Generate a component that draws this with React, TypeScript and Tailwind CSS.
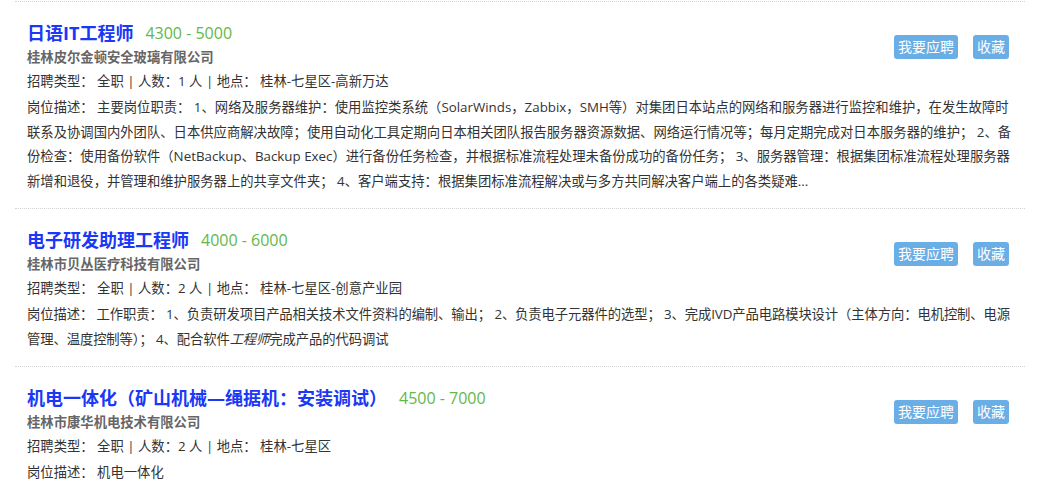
const jobs = [
    {
        title: "日语IT工程师",
        salary: "4300 - 5000",
        company: "桂林皮尔金顿安全玻璃有限公司",
        count: 1,
        place: "桂林-七星区-高新万达",
        tight: false,
        desc: (
            <>
                主要岗位职责： 1、网络及服务器维护：使用监控类系统（SolarWinds，Zabbix，SMH等）对集团日本站点的网络和服务器进行监控和维护，在发生故障时联系及协调国内外团队、日本供应商解决故障；使用自动化工具定期向日本相关团队报告服务器资源数据、网络运行情况等；每月定期完成对日本服务器的维护； 2、备份检查：使用备份软件（NetBackup、Backup Exec）进行备份任务检查，并根据标准流程处理未备份成功的备份任务； 3、服务器管理：根据集团标准流程处理服务器新增和退役，并管理和维护服务器上的共享文件夹； 4、客户端支持：根据集团标准流程解决或与多方共同解决客户端上的各类疑难...
            </>
        ),
    },
    {
        title: "电子研发助理工程师",
        salary: "4000 - 6000",
        company: "桂林市贝丛医疗科技有限公司",
        count: 2,
        place: "桂林-七星区-创意产业园",
        tight: true,
        desc: (
            <>
                工作职责： 1、负责研发项目产品相关技术文件资料的编制、输出； 2、负责电子元器件的选型； 3、完成IVD产品电路模块设计（主体方向：电机控制、电源管理、温度控制等）； 4、配合软件<i>工程师</i>完成产品的代码调试
            </>
        ),
    },
    {
        title: "机电一体化（矿山机械—绳据机：安装调试）",
        salary: "4500 - 7000",
        company: "桂林市康华机电技术有限公司",
        count: 2,
        place: "桂林-七星区",
        tight: false,
        desc: <>机电一体化</>,
    },
]

export default function App() {
    return (
        <div className="bg-white h-[499px] overflow-hidden pt-px" style={{ fontFamily: '"Open Sans", "Noto Sans CJK SC", sans-serif' }}>
            <ul className="ml-[15px] w-[1010px] border-t border-dotted border-[#d4d4d4]">
                {jobs.map((job) => (
                    <li key={job.title} className="border-b border-dotted border-[#d4d4d4] pl-[12px] pr-[8px] pt-[17px] pb-[15px]">
                        <div className="float-right mt-[16px] mr-[8px] flex gap-[15px]">
                            <button className="h-[24px] px-[4px] rounded-[3px] bg-[#6aaee6] text-white text-[14px] leading-[24px]">我要应聘</button>
                            <button className="h-[24px] px-[4px] rounded-[3px] bg-[#6aaee6] text-white text-[14px] leading-[24px]">收藏</button>
                        </div>
                        <div className="h-[28px] flex items-center">
                            <h3 className="text-[18px] font-bold text-[#1a38f5] leading-[28px]">{job.title}</h3>
                            <span className="ml-[12px] text-[16px] text-[#62b84a] leading-[28px]">{job.salary}</span>
                        </div>
                        <div className="h-[20px] text-[13.33px] leading-[20px] font-bold text-[#666]">{job.company}</div>
                        <div className="h-[28px] text-[13.33px] leading-[28px] text-[#333]">
                            招聘类型： 全职 | 人数：{job.count} 人 | 地点： {job.place}
                        </div>
                        <p className={job.tight ? "text-[13.33px] leading-[24.5px] text-[#333] tracking-[-0.1px]" : "text-[13.33px] leading-[24.5px] text-[#333]"}>
                            岗位描述： {job.desc}
                        </p>
                    </li>
                ))}
            </ul>
        </div>
    )
}
